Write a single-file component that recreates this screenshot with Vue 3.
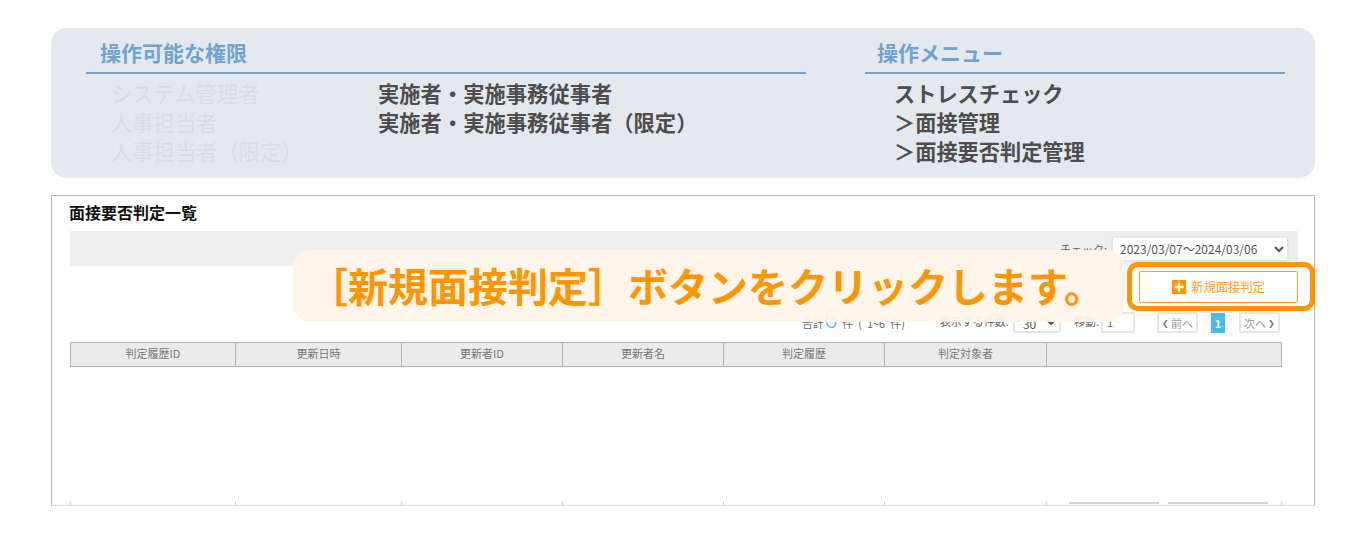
<script setup>
const roles = [
  ['システム管理者', '実施者・実施事務従事者'],
  ['人事担当者', '実施者・実施事務従事者（限定）'],
  ['人事担当者（限定）', ''],
]
const menu = ['ストレスチェック', '＞面接管理', '＞面接要否判定管理']
const columns = ['判定履歴ID', '更新日時', '更新者ID', '更新者名', '判定履歴', '判定対象者', '']
</script>

<template>
  <div class="page">
    <section class="info">
      <div class="block block-roles">
        <h2>操作可能な権限</h2>
        <div class="rows">
          <div v-for="r in roles" :key="r[0]" class="row">
            <span class="role">{{ r[0] }}</span>
            <span class="perm">{{ r[1] }}</span>
          </div>
        </div>
      </div>
      <div class="block block-menu">
        <h2>操作メニュー</h2>
        <div class="rows menu">
          <div v-for="(m, i) in menu" :key="m" class="menu-item" :class="{ sub: i > 0 }">{{ m }}</div>
        </div>
      </div>
    </section>

    <section class="frame">
      <h1>面接要否判定一覧</h1>
      <div class="filter">
        <label>チェック:</label>
        <select class="sel sel-date"><option>2023/03/07～2024/03/06</option></select>
      </div>
      <div class="actions">
        <button class="new-btn">
          <svg width="14" height="14" viewBox="0 0 14 14"><rect width="14" height="14" fill="#ff9500" /><path d="M7 2.5v9M2.5 7h9" stroke="#fff" stroke-width="2.4" /></svg>
          新規面接判定
        </button>
      </div>
      <div class="pager">
        <span class="total">合計<b>6</b> 件 ( 1~6 件)</span>
        <span class="lbl lbl-count">表示する件数:</span>
        <select class="sel sel-num"><option>30</option></select>
        <span class="lbl lbl-move">移動:</span>
        <input class="move" value="1" />
        <span class="pg pg-prev"><i>❮</i> 前へ</span>
        <span class="cur">1</span>
        <span class="pg pg-next">次へ <i>❯</i></span>
      </div>
      <div class="table">
        <div class="thead">
          <div v-for="c in columns" :key="c" class="th">{{ c }}</div>
        </div>
        <div class="tbody"></div>
        <div class="tfoot">
          <div v-for="c in 6" :key="c" class="tf"></div>
          <div class="tf tf-last"><span class="fbtn f1"></span><span class="fbtn f2"></span></div>
        </div>
      </div>
    </section>

    <div class="callout">［新規面接判定］ボタンをクリックします。</div>
    <div class="highlight"></div>
  </div>
</template>

<style scoped>
.page {
  position: relative;
  width: 1366px;
  height: 534px;
  padding: 28px 51px 0;
  box-sizing: border-box;
  background: #fff;
  font-family: "Noto Sans CJK JP", "Noto Sans", sans-serif;
  overflow: hidden;
}
.info {
  display: flex;
  height: 150px;
  padding: 0 30px 0 35px;
  background: #e4e9f0;
  border-radius: 16px;
  box-sizing: border-box;
  gap: 59px;
}
.block-roles { width: 720px; }
.block-menu { width: 420px; }
h2 {
  margin: 0;
  height: 44px;
  padding-left: 14px;
  font-size: 21px;
  line-height: 49px;
  font-weight: 700;
  color: #70a3cd;
  border-bottom: 2px solid #70a3cd;
}
.block-menu h2 { padding-left: 12px; }
.rows { padding-top: 4px; }
.row { display: flex; height: 29px; line-height: 29px; font-size: 21.3px; }
.role { width: 292px; padding-left: 25px; box-sizing: border-box; color: #d9dde2; font-weight: 400; }
.perm { color: #4d4d4d; font-weight: 700; }
.menu { padding-left: 29px; }
.menu-item { height: 29px; line-height: 29px; font-size: 21.2px; font-weight: 700; color: #4d4d4d; }
.frame {
  height: 311px;
  margin-top: 17px;
  padding: 0 16px 0 18px;
  border: 1px solid #b8b8b8;
  border-bottom-color: #dcdcdc;
  box-sizing: border-box;
  overflow: hidden;
  background: #fff;
}
h1 {
  margin: 0 0 0 -1px;
  height: 35px;
  font-size: 16px;
  line-height: 33px;
  font-weight: 700;
  color: #111;
}
.filter {
  display: flex;
  align-items: center;
  justify-content: flex-end;
  height: 35px;
  padding-right: 9px;
  background: #eeeeee;
  font-size: 11px;
  color: #666;
}
.filter label { margin-right: 4px; }
.sel {
  font-family: "Noto Sans CJK JP", sans-serif;
  font-size: 12px;
  color: #555;
  background: #fff;
  border: 2px solid #e6e6e6;
  border-radius: 3px;
  box-sizing: border-box;
}
.sel-date { width: 178px; height: 26px; padding-left: 3px; }
.actions { display: flex; justify-content: flex-end; margin-top: 5px; }
.new-btn {
  display: flex;
  align-items: center;
  justify-content: center;
  gap: 5px;
  width: 159px;
  height: 32px;
  background: #fff;
  border: 1px solid #ff9f2a;
  border-radius: 2px;
  font-family: inherit;
  font-size: 12.3px;
  color: #ff9f2a;
}
.pager {
  display: flex;
  align-items: center;
  height: 23px;
  margin-top: 8px;
  margin-right: 18px;
  justify-content: flex-end;
  font-size: 11px;
  color: #666;
}
.total { word-spacing: 2.5px; margin-bottom: 9px; }
.total b { font-size: 25px; font-weight: 300; color: #5db7e8; line-height: 23px; }
.lbl { margin-bottom: 3px; }
.lbl-count { margin-left: 35px; margin-right: 4px; }
.sel-num { width: 48px; height: 21px; padding-left: 4px; }
.lbl-move { margin-left: 13px; margin-right: 2px; }
.move {
  width: 34px;
  height: 21px;
  padding: 0 4px;
  border: 2px solid #e6e6e6;
  border-radius: 2px;
  box-sizing: border-box;
  font-size: 11px;
  color: #666;
}
.pg {
  display: flex;
  align-items: center;
  justify-content: center;
  gap: 2px;
  width: 41px;
  height: 21px;
  border: 2px solid #e6e6e6;
  border-radius: 2px;
  box-sizing: border-box;
  color: #999;
  white-space: nowrap;
}
.pg i { font-style: normal; font-size: 8px; color: #777; }
.pg-prev { margin-left: 22px; }
.cur {
  width: 14px;
  height: 20px;
  margin: 0 14px 0 13px;
  background: #45bde9;
  color: #fff;
  font-size: 11px;
  font-weight: 700;
  text-align: center;
  line-height: 20px;
}
.table { width: 1212px; margin-top: 8px; }
.thead, .tfoot {
  display: grid;
  grid-template-columns: 165px 166px 161px 161px 161px 162px 236px;
}
.thead { border-top: 1px solid #b4b4b4; border-bottom: 1px solid #b4b4b4; border-right: 1px solid #b4b4b4; background: #ebebeb; }
.th {
  height: 23px;
  line-height: 21px;
  text-align: center;
  font-size: 11px;
  color: #777;
  border-left: 1px solid #b4b4b4;
}
.tbody { height: 135px; }
.tf { height: 12px; border-left: 1px solid #c4c4c4; }
.tf-last { display: flex; gap: 9px; padding-left: 22px; border-right: 1px solid #c4c4c4; }
.fbtn { height: 12px; background: #fff; border-top: 2px solid #c8d6e4; box-sizing: border-box; }
.f1 { width: 90px; }
.f2 { width: 100px; }

.callout {
  position: absolute;
  left: 293px;
  top: 250px;
  width: 832px;
  height: 72px;
  padding-left: 15px;
  box-sizing: border-box;
  border-radius: 18px;
  background: rgba(255, 244, 232, 0.93);
  color: #ff9500;
  font-size: 40px;
  line-height: 70px;
  font-weight: 700;
  white-space: nowrap;
}
.highlight {
  position: absolute;
  left: 1127px;
  top: 262px;
  width: 188px;
  height: 49px;
  box-sizing: border-box;
  border: 5px solid #ff9500;
  border-radius: 11px;
}
</style>
